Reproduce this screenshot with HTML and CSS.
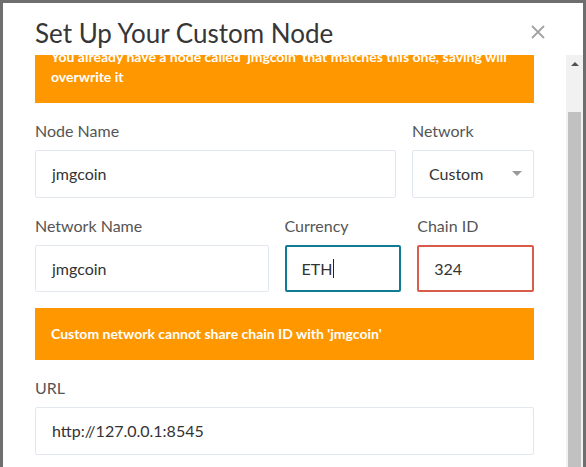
FILE: index.html
```html
<!DOCTYPE html>
<html>
<head>
<meta charset="utf-8">
<link rel="stylesheet" href="styles.css">
</head>
<body>
<div class="page">
  <div class="modal">
    <div class="modal-header">
      <h1 class="title">Set Up Your Custom Node</h1>
      <svg class="close" width="14" height="14" viewBox="0 0 14 14"><path d="M1 1L13 13M13 1L1 13" stroke="#a3a3a3" stroke-width="1.8" fill="none"/></svg>
    </div>
    <div class="modal-main">
      <div class="scroll">
        <div class="content">
          <div class="alert alert-first">You already have a node called 'jmgcoin' that matches this one, saving will overwrite it</div>
          <div class="row row-a">
            <div class="group">
              <label class="label">Node Name</label>
              <div class="input">jmgcoin</div>
            </div>
            <div class="group">
              <label class="label">Network</label>
              <div class="input select">Custom<span class="caret"></span></div>
            </div>
          </div>
          <div class="row row-b">
            <div class="group">
              <label class="label">Network Name</label>
              <div class="input">jmgcoin</div>
            </div>
            <div class="group">
              <label class="label">Currency</label>
              <div class="input focus">ETH<span class="cursor"></span></div>
            </div>
            <div class="group">
              <label class="label">Chain ID</label>
              <div class="input invalid">324</div>
            </div>
          </div>
          <div class="alert">Custom network cannot share chain ID with 'jmgcoin'</div>
          <div class="group">
            <label class="label">URL</label>
            <div class="input">http://127.0.0.1:8545</div>
          </div>
        </div>
      </div>
      <div class="scrollbar">
        <div class="sb-button"><span class="sb-arrow"></span></div>
        <div class="sb-gap"></div>
        <div class="sb-thumb"></div>
      </div>
    </div>
  </div>
</div>
</body>
</html>
```

FILE: styles.css
```css
html, body {
  margin: 0;
  padding: 0;
}
body {
  background: #6e6e6e;
  font-family: Lato, "Open Sans", sans-serif;
  width: 586px;
  height: 467px;
  overflow: hidden;
}
.page {
  padding: 3px 3px 0 3px;
  height: 464px;
}
.modal {
  background: #fff;
  height: 464px;
  display: flex;
  flex-direction: column;
  overflow: hidden;
}
.modal-header {
  height: 52px;
  box-sizing: border-box;
  padding: 10px 38px 2px 32px;
  display: flex;
  justify-content: space-between;
  align-items: flex-start;
  flex: none;
}
.title {
  margin: 0;
  font-size: 26px;
  line-height: 40px;
  font-weight: 400;
  color: #363636;
}
.close {
  margin-top: 12px;
  display: block;
}
.modal-main {
  flex: 1;
  display: flex;
  min-height: 0;
}
.scroll {
  flex: 1;
  overflow: hidden;
  padding: 0 32px;
}
.content {
  margin-top: -24px;
}
.alert {
  background: #ff9800;
  color: #fff;
  font-weight: 700;
  font-size: 14px;
  line-height: 20px;
  padding: 16px;
  margin-bottom: 16px;
}
.row {
  display: grid;
  column-gap: 16px;
}
.row-a {
  grid-template-columns: 1fr 122px;
}
.row-b {
  grid-template-columns: 2fr 1fr 1fr;
}
.group {
  margin-bottom: 16px;
}
.label {
  display: block;
  font-size: 16px;
  line-height: 20px;
  color: #555;
  padding-top: 2px;
  margin-bottom: 9px;
}
.input {
  box-sizing: border-box;
  height: 47.5px;
  border: 1px solid #e3e7ee;
  border-radius: 2px;
  padding: 0 16px;
  display: flex;
  align-items: center;
  font-size: 16px;
  color: #333;
  background: #fff;
}
.select {
  justify-content: space-between;
  padding-right: 11px;
}
.caret {
  width: 0;
  height: 0;
  border-left: 5px solid transparent;
  border-right: 5px solid transparent;
  border-top: 5px solid #999;
}
.focus {
  border: 2px solid #0f7b95;
  padding: 0 15px;
}
.invalid {
  border: 2px solid #d95c4a;
  padding: 0 15px;
}
.cursor {
  display: inline-block;
  width: 1px;
  height: 19px;
  background: #222;
  margin-left: 1px;
}
.scrollbar {
  width: 17px;
  flex: none;
  background: #f1f1f1;
  display: flex;
  flex-direction: column;
}
.sb-button {
  height: 17px;
  display: flex;
  align-items: center;
  justify-content: center;
}
.sb-arrow {
  width: 0;
  height: 0;
  border-left: 4px solid transparent;
  border-right: 4px solid transparent;
  border-bottom: 4px solid #505050;
}
.sb-gap {
  height: 40px;
}
.sb-thumb {
  flex: 1;
  margin: 0 2px;
  background: #c1c1c1;
}
```
